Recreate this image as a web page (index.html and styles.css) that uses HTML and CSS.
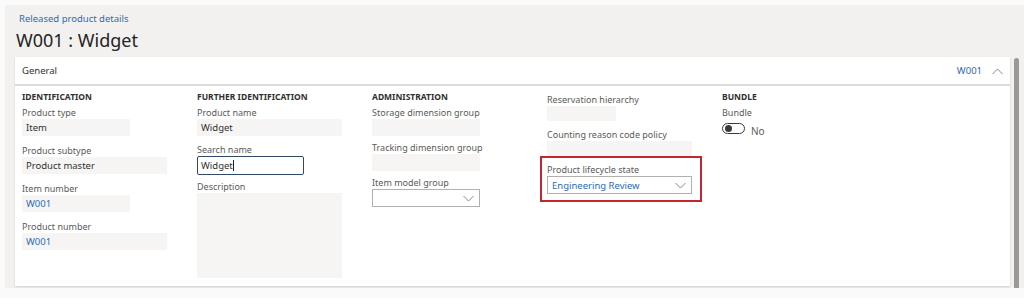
FILE: index.html
```html
<!DOCTYPE html>
<html lang="en">
<head>
    <meta charset="UTF-8">
    <title>Released product details</title>
    <link rel="stylesheet" href="styles.css">
</head>
<body>
    <div class="page">
        <a href="#" class="crumb">Released product details</a>
        <h1 class="title">W001 : Widget</h1>

        <div class="main">
            <section class="card">
                <header class="card-head">
                    <span>General</span>
                    <span class="head-right">
                        <span class="link">W001</span>
                        <svg class="chev-up" width="11" height="7" viewBox="0 0 11 7"><polyline points="0.5,6 5.5,1 10.5,6" fill="none" stroke="#8a8886" stroke-width="1"/></svg>
                    </span>
                </header>

                <div class="card-body">
                    <div class="col col-loose">
                        <h2 class="group-title">IDENTIFICATION</h2>
                        <div class="group">
                            <div class="label">Product type</div>
                            <div class="field w-s">Item</div>
                        </div>
                        <div class="group">
                            <div class="label">Product subtype</div>
                            <div class="field w-m">Product master</div>
                        </div>
                        <div class="group">
                            <div class="label">Item number</div>
                            <div class="field w-s link">W001</div>
                        </div>
                        <div class="group">
                            <div class="label">Product number</div>
                            <div class="field w-m link">W001</div>
                        </div>
                    </div>

                    <div class="col">
                        <h2 class="group-title">FURTHER IDENTIFICATION</h2>
                        <div class="group">
                            <div class="label">Product name</div>
                            <div class="field w-m">Widget</div>
                        </div>
                        <div class="group tight">
                            <div class="label">Search name</div>
                            <div class="input">Widget<span class="caret"></span></div>
                        </div>
                        <div class="group">
                            <div class="label">Description</div>
                            <div class="field w-m memo"></div>
                        </div>
                    </div>

                    <div class="col">
                        <h2 class="group-title">ADMINISTRATION</h2>
                        <div class="group tight">
                            <div class="label">Storage dimension group</div>
                            <div class="field w-s"></div>
                        </div>
                        <div class="group tight">
                            <div class="label">Tracking dimension group</div>
                            <div class="field w-s"></div>
                        </div>
                        <div class="group">
                            <div class="label">Item model group</div>
                            <div class="select w-s">
                                <span></span>
                                <svg width="11" height="7" viewBox="0 0 11 7"><polyline points="0.5,1 5.5,6 10.5,1" fill="none" stroke="#8a8886" stroke-width="1"/></svg>
                            </div>
                        </div>
                    </div>

                    <div class="col col-plain">
                        <div class="group">
                            <div class="label">Reservation hierarchy</div>
                            <div class="field short w-xs"></div>
                        </div>
                        <div class="group flush">
                            <div class="label">Counting reason code policy</div>
                            <div class="field short w-m"></div>
                        </div>
                        <div class="highlight">
                            <div class="label">Product lifecycle state</div>
                            <div class="select w-m">
                                <span class="link">Engineering Review</span>
                                <svg width="11" height="7" viewBox="0 0 11 7"><polyline points="0.5,1 5.5,6 10.5,1" fill="none" stroke="#8a8886" stroke-width="1"/></svg>
                            </div>
                        </div>
                    </div>

                    <div class="col">
                        <h2 class="group-title">BUNDLE</h2>
                        <div class="group">
                            <div class="label">Bundle</div>
                            <div class="toggle-row">
                                <span class="toggle"><span class="knob"></span></span>
                                <span class="toggle-text">No</span>
                            </div>
                        </div>
                    </div>
                </div>
            </section>
            <div class="scrollbar"></div>
        </div>
    </div>
</body>
</html>
```

FILE: styles.css
```css
:root {
    --page-bg: #f2f1f0;
    --field-bg: #f7f5f3;
    --text: #323130;
    --label: #5c5a58;
    --blue: #2b6cb5;
    --line: #dedcda;
}

body {
    margin: 0;
    background-color: #fafafa;
    font-family: "Noto Sans", "Open Sans", sans-serif;
    color: var(--text);
}

.page {
    margin: 5px 0 0 5px;
    height: 283px;
    padding: 7px 0 0 10px;
    box-sizing: border-box;
    background-color: var(--page-bg);
}

.crumb {
    display: block;
    padding-left: 4px;
    font-size: 9.5px;
    line-height: 13px;
    color: var(--blue);
    text-decoration: none;
}

.title {
    margin: 3px 0 0;
    padding-left: 1px;
    font-size: 18px;
    line-height: 24px;
    font-weight: 400;
    color: #252423;
}

.main {
    display: flex;
    gap: 4px;
    margin-top: 5px;
}

.card {
    width: 995px;
    height: 229px;
    background-color: white;
    box-shadow: 0 1px 2px rgba(0, 0, 0, 0.14);
}

.card-head {
    display: flex;
    justify-content: space-between;
    align-items: center;
    height: 27px;
    padding: 0 7px;
    border-bottom: 2px solid var(--line);
    font-size: 9.5px;
}

.head-right {
    display: flex;
    align-items: center;
    gap: 10px;
}

.chev-up {
    margin-top: 1px;
}

.link {
    color: var(--blue);
}

.card-body {
    display: grid;
    grid-template-columns: repeat(4, 175px) auto;
    padding: 4px 7px 0;
}

.col-plain {
    padding-top: 3px;
}

.group-title {
    margin: 0 0 2px;
    font-size: 8.5px;
    line-height: 14px;
    font-weight: 700;
    color: var(--text);
}

.group {
    margin-bottom: 7px;
}

.col-loose .group {
    margin-bottom: 8px;
}

.group.tight {
    margin-bottom: 5px;
}

.group.flush {
    margin-bottom: 0;
}

.label {
    font-size: 9px;
    line-height: 13px;
    color: var(--label);
}

.field {
    height: 17px;
    padding: 0 4px;
    box-sizing: border-box;
    background-color: var(--field-bg);
    font-size: 9.5px;
    line-height: 17px;
}

.field.short {
    height: 15px;
}

.field.memo {
    height: 85px;
}

.w-xs { width: 69px; }
.w-s { width: 108px; }
.w-m { width: 145px; }

.input {
    display: flex;
    align-items: center;
    width: 107px;
    height: 19px;
    padding: 0 3px;
    box-sizing: border-box;
    border: 1px solid #2f4a66;
    border-radius: 2px;
    font-size: 9.5px;
}

.caret {
    width: 1px;
    height: 11px;
    background-color: #222;
}

.select {
    display: flex;
    justify-content: space-between;
    align-items: center;
    height: 18px;
    padding: 0 5px 0 4px;
    box-sizing: border-box;
    border: 1px solid #b3b0ad;
    background-color: white;
    font-size: 9.5px;
}

.highlight {
    width: 162px;
    margin-left: -7px;
    padding: 5px 8px 6px 5px;
    box-sizing: border-box;
    border: 2px solid #c4262e;
}

.toggle-row {
    display: flex;
    gap: 6px;
    margin-top: 4px;
}

.toggle {
    display: flex;
    align-items: center;
    width: 23px;
    height: 11px;
    padding: 0 2px;
    box-sizing: border-box;
    border: 1px solid #3b3a39;
    border-radius: 6px;
}

.knob {
    width: 7px;
    height: 7px;
    border-radius: 50%;
    background-color: #3b3a39;
}

.toggle-text {
    margin-top: 2px;
    font-size: 10px;
    line-height: 13px;
    color: var(--label);
}

.scrollbar {
    width: 5px;
    height: 232px;
    margin-top: 1px;
    border-radius: 3px;
    background-color: #9a9998;
}
```
